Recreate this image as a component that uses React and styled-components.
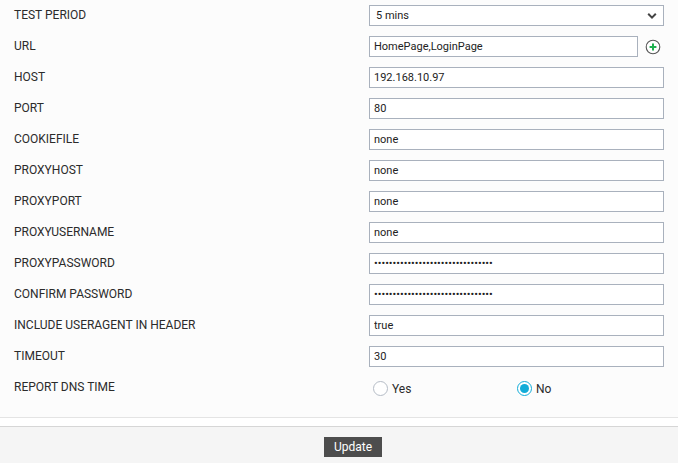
import React from 'react';
import styled, { createGlobalStyle } from 'styled-components';

const Global = createGlobalStyle`
  html, body { margin: 0; padding: 0; background: #fcfcfc; }
  body { font-family: Roboto, "Liberation Sans", sans-serif; font-size: 12px; color: #222; }
  * { box-sizing: border-box; }
`;

const Page = styled.div`
  width: 678px;
  height: 463px;
  display: flex;
  flex-direction: column;
  overflow: hidden;
`;

const Form = styled.div`
  padding-top: 5px;
  display: flex;
  flex-direction: column;
  gap: 10px;
`;

const Row = styled.div`
  display: grid;
  grid-template-columns: 369px 295px;
  height: 21px;
  align-items: center;
`;

const Label = styled.label`
  padding-left: 14px;
  font-size: 12px;
  line-height: 16px;
  color: #2b2b2b;
  margin-top: -1px;
`;

const Field = styled.div`
  display: flex;
  align-items: center;
  position: relative;
`;

const Input = styled.input`
  width: ${p => p.$w || 295}px;
  height: 21px;
  border: 1px solid #a9b1bd;
  background: #fff;
  padding: 0 4px 1px;
  margin: 0;
  font-family: Roboto, sans-serif;
  font-size: 11px;
  color: #222;
  outline: none;
  border-radius: 0;
`;

const SelectBox = styled.select`
  width: 295px;
  height: 21px;
  border: 1px solid #a9b1bd;
  background: #fff;
  padding: 0 6px 1px;
  margin: 0;
  font-family: Roboto, sans-serif;
  font-size: 11px;
  color: #222;
  appearance: none;
  border-radius: 0;
  outline: none;
`;

const Chevron = styled.svg`
  position: absolute;
  right: 7px;
  top: 7px;
  width: 10px;
  height: 8px;
  pointer-events: none;
`;

const AddButton = styled.svg`
  width: 16px;
  height: 16px;
  margin-left: 7px;
  flex: none;
`;

const RadioRow = styled(Row)`
  margin-top: 0;
`;

const Radios = styled.div`
  display: grid;
  grid-template-columns: 144px 100px;
  padding: 2px 0 0 4px;
`;

const RadioItem = styled.div`
  display: flex;
  align-items: center;
  gap: 4px;
  font-size: 12px;
  color: #2b2b2b;
`;

const RadioMark = styled.span`
  width: 15px;
  height: 15px;
  border-radius: 50%;
  border: 1px solid ${p => (p.$on ? '#12acd8' : '#b5bcc6')};
  background: #fff;
  display: flex;
  align-items: center;
  justify-content: center;
  &::after {
    content: '';
    width: 9px;
    height: 9px;
    border-radius: 50%;
    background: ${p => (p.$on ? '#12acd8' : 'transparent')};
  }
`;

const Rule = styled.div`
  margin-top: 19px;
  height: 9px;
  flex: none;
  background: #fff;
  border-top: 1px solid #e4e4e4;
`;

const Footer = styled.div`
  flex: 1;
  background: #f5f5f5;
  border-top: 1px solid #d6d6d6;
  display: flex;
  justify-content: center;
  padding-top: 10px;
  padding-left: 28px;
`;

const Update = styled.button`
  width: 58px;
  height: 20px;
  border: 0;
  padding: 0;
  background: #4d4d4d;
  color: #fff;
  font-family: Roboto, sans-serif;
  font-size: 12px;
  font-weight: 400;
  border-radius: 0;
`;

const fields = [
  ['HOST', '192.168.10.97'],
  ['PORT', '80'],
  ['COOKIEFILE', 'none'],
  ['PROXYHOST', 'none'],
  ['PROXYPORT', 'none'],
  ['PROXYUSERNAME', 'none'],
  ['PROXYPASSWORD', 'passwordpasswordpasswordpassword', 'password'],
  ['CONFIRM PASSWORD', 'passwordpasswordpasswordpassword', 'password'],
  ['INCLUDE USERAGENT IN HEADER', 'true'],
  ['TIMEOUT', '30'],
];

export default function App() {
  return (
    <Page>
      <Global />
      <Form>
        <Row>
          <Label>TEST PERIOD</Label>
          <Field>
            <SelectBox defaultValue="5 mins">
              <option>5 mins</option>
              <option>10 mins</option>
            </SelectBox>
            <Chevron viewBox="0 0 10 8">
              <path d="M1.2 1.8 L5 5.6 L8.8 1.8" fill="none" stroke="#444" strokeWidth="2" />
            </Chevron>
          </Field>
        </Row>
        <Row>
          <Label>URL</Label>
          <Field>
            <Input $w={269} defaultValue="HomePage,LoginPage" />
            <AddButton viewBox="0 0 16 16">
              <circle cx="8" cy="8" r="6.8" fill="#fff" stroke="#555" strokeWidth="1.1" />
              <path d="M8 4.6 V11.4 M4.6 8 H11.4" stroke="#1fb04f" strokeWidth="2" />
            </AddButton>
          </Field>
        </Row>
        {fields.map(([label, value, type]) => (
          <Row key={label}>
            <Label>{label}</Label>
            <Field>
              <Input type={type || 'text'} defaultValue={value} />
            </Field>
          </Row>
        ))}
        <RadioRow>
          <Label>REPORT DNS TIME</Label>
          <Radios>
            <RadioItem><RadioMark />Yes</RadioItem>
            <RadioItem><RadioMark $on />No</RadioItem>
          </Radios>
        </RadioRow>
      </Form>
      <Rule />
      <Footer>
        <Update>Update</Update>
      </Footer>
    </Page>
  );
}
